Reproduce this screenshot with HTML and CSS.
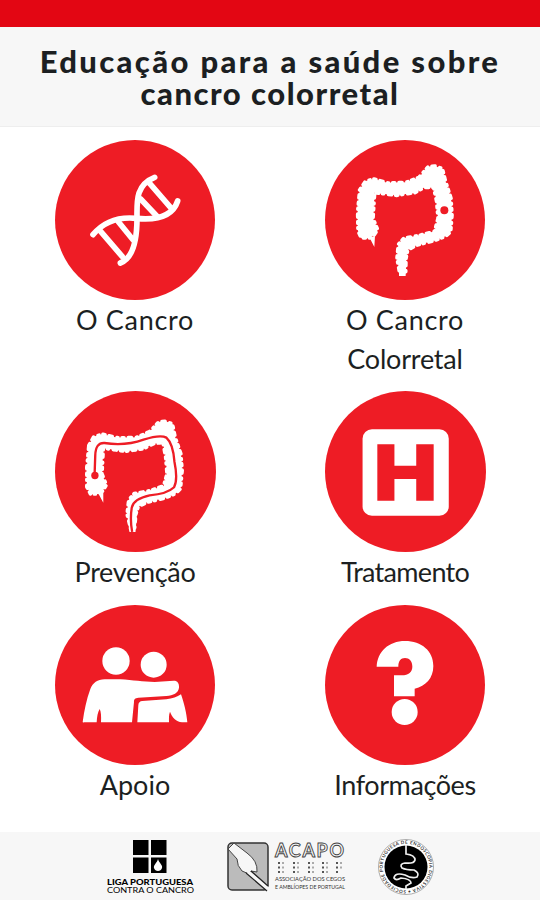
FILE: index.html
```html
<!DOCTYPE html>
<html lang="pt">
<head>
  <meta charset="UTF-8">
  <meta name="viewport" content="width=device-width, initial-scale=1.0">
  <title>Educação para a saúde sobre cancro colorretal</title>
  <link rel="stylesheet" href="styles.css">
</head>
<body>
  <div class="topbar"></div>
  <header class="header">
    <h1><span class="line-one">Educação para a saúde sobre</span><br><span class="line-two">cancro colorretal</span></h1>
  </header>

  <main class="menu">
    <a class="item cancro">
      <!-- ADN -->
      <svg class="icon" viewBox="16 15 480 480">
        <g class="dna">
          <path d="M130 299C165 257 210 245 260 250C330 257 370 240 384 198"/>
          <path d="M315 127C257 150 262 200 262 250C262 320 250 370 212 384"/>
          <path d="M151 287L218 365M206 260L250 314M273 192L324 246M300 145L365 220"/>
        </g>
      </svg>
      <span>O Cancro</span>
    </a>
    <a class="item colorretal">
      <svg class="icon" viewBox="16 15 480 480">
        <path class="colon" d="M120 165L138 138L163 132L205 144L260 142L298 127L325 96L345 93L368 101L378 140L394 190L397 240L393 290L378 304L340 318L290 331L264 345L259 370L258 415L240 415L232 370L236 328L252 310L300 301L345 289L355 250L351 200L342 158L315 157L285 173L230 181L165 173L160 250L174 284L163 300L150 309L125 309L115 288L114 230Z"/>
        <path class="shape" d="M149 307L164 336L166 303ZM238 370L238 423H258L260 355Z"/>
        <circle class="spot" cx="374" cy="226" r="12"/>
      </svg>
      <span><span class="first">O Cancro</span><br>Colorretal</span>
    </a>
    <a class="item prevencao">
      <svg class="icon" viewBox="16 18 480 480">
        <path class="colon" d="M117 180L132 154L158 147L205 158L260 156L298 139L325 111L345 108L366 116L374 155L391 205L395 255L390 309L375 324L340 338L290 350L264 363L257 385L253 430L242 430L231 385L236 342L252 324L300 315L340 301L350 265L346 215L338 172L312 174L280 190L225 198L160 188L156 265L169 298L158 316L147 325L122 325L111 304L111 245Z"/>
        <path class="shape" d="M144 321L160 351L160 316ZM231 385L238 438H256L262 365Z"/>
        <!-- percurso do endoscópio -->
        <path class="scope" d="M134 268L136 210Q137 172 163 173Q225 183 280 163Q330 147 348 157Q368 175 372 228Q383 282 371 305Q350 325 298 329Q251 339 245 365Q239 400 246 438"/>
        <circle class="spot" cx="135" cy="270" r="11"/>
      </svg>
      <span>Prevenção</span>
    </a>
    <a class="item tratamento">
      <svg class="icon" viewBox="16 18 480 480">
        <rect class="shape" x="128" y="132" width="257" height="258" rx="28"/>
        <path class="spot" d="M172 177H223V241H288V177H340V345H288V280H223V345H172Z"/>
      </svg>
      <span>Tratamento</span>
    </a>
    <a class="item apoio">
      <svg class="icon" viewBox="16 15 480 480">
        <circle class="shape" cx="199" cy="183" r="41"/>
        <circle class="shape" cx="312" cy="194" r="39"/>
        <path class="shape" d="M99 366C104 330 110 300 122 267C130 248 143 239 165 238H212C250 240 280 246 315 246L372 242C384 242 389 250 388 263C386 279 371 286 350 288L266 293C256 294 253 297 253 306L247 367H154C155 348 154 335 150 327C144 337 142 349 141 367H104Q99 368 99 366Z"/>
        <path class="shape" d="M263 367L266 315Q267 304 278 303L350 298Q377 295 394 283C402 305 411 340 413 367H397C379 365 367 352 361 335C357 345 358 356 358 367Z"/>
      </svg>
      <span>Apoio</span>
    </a>
    <a class="item informacoes">
      <svg class="icon" viewBox="16 15 480 480">
        <path class="shape" d="M171 200C173 155 207 123 256 123C306 123 341 153 341 198C341 235 318 258 285 266V289H223V226H246C267 226 278 215 278 200C278 184 269 174 256 174C243 174 236 184 236 200Z"/>
        <circle class="shape" cx="255" cy="336" r="39"/>
      </svg>
      <span>Informações</span>
    </a>
  </main>

  <footer class="footer">
    <!-- Liga Portuguesa Contra o Cancro -->
    <svg class="logo-liga" viewBox="0 0 90 68">
      <path d="M28 8H43.500V23H28ZM46 8H61.500V23H46ZM28 25.500H43.500V41H28ZM46 25.500H61.500V41H46Z"/>
      <path class="flame" d="M53 27C54 31 58 33 57 36C56 40 50 40 49 36C48 33 52 31 53 27Z"/>
      <text class="liga-name" x="2" y="52.500" textLength="86" lengthAdjust="spacingAndGlyphs">LIGA PORTUGUESA</text>
      <text class="liga-sub" x="2" y="61" textLength="87" lengthAdjust="spacingAndGlyphs">CONTRA O CANCRO</text>
    </svg>
    <!-- ACAPO -->
    <svg class="logo-acapo" viewBox="0 0 124 68">
      <rect class="hand-box" x="3" y="11" width="40" height="47" rx="4"/>
      <path class="hand" d="M3 17L9 11L22 21Q33 29 32 40L26 39L24 42L17 39Q12 34 12 27Z"/>
      <path class="stick" d="M23 40L43 57"/>
      <path class="cane" d="M21 41L42 59M26 39L43 54"/>
      <text class="acapo-name" x="50" y="25" textLength="69">ACAPO</text>
      <g class="braille">
        <path d="M54 30V41M69 30V41M84 30V41M98 30V41M112 30V41"/>
        <path class="faint" d="M58 30V41M73 30V41M88 30V41M102 30V41M116 30V37"/>
      </g>
      <text class="acapo-sub" x="50" y="49" textLength="70" lengthAdjust="spacingAndGlyphs">ASSOCIAÇÃO DOS CEGOS</text>
      <text class="acapo-sub" x="50" y="57" textLength="70" lengthAdjust="spacingAndGlyphs">E AMBLÍOPES DE PORTUGAL</text>
    </svg>
    <!-- Sociedade de endoscopia -->
    <svg class="logo-round" viewBox="0 0 58 68">
      <circle class="ring" cx="29" cy="35" r="27.500"/>
      <circle cx="29" cy="35" r="21.500"/>
      <path id="ring-path" class="no-fill" d="M29 58.300A23.300 23.300 0 1 1 29.100 58.300"/>
      <text class="ring-text"><textPath href="#ring-path" textLength="144">SOCIEDADE PORTUGUESA DE ENDOSCOPIA DIGESTIVA •</textPath></text>
      <path class="snake" d="M29 13V22Q38 23 38 28Q37 32 28 31Q22 32 25 36Q29 38 37 38Q43 41 40 45Q35 47 28 43Q18 40 17 46Q19 49 24 46Q34 47 34 51L29 54V57"/>
    </svg>
  </footer>
</body>
</html>
```
FILE: styles.css
```css
body {
  margin: 0;
  height: 900px;
  display: flex;
  flex-direction: column;
  background: #fff;
  color: #1c1f22;
  font-family: Lato, sans-serif;
  overflow: hidden;
}

/* Barra vermelha */
.topbar {
  height: 27px;
  flex: none;
  background: #e30613;
}

/* Título */
.header {
  box-sizing: border-box;
  height: 100px;
  flex: none;
  padding-top: 18px;
  background: #f7f7f7;
  border-bottom: 1px solid #eee;
  text-align: center;
}

h1 {
  margin: 0;
  font-size: 31px;
  font-weight: 900;
  line-height: 32px;
  white-space: nowrap;
}

.line-one {
  letter-spacing: 2.35px;
}

.line-two {
  letter-spacing: 1.5px;
}

/* Menu */
.menu {
  flex: 1;
  display: grid;
  grid-template-columns: 270px 270px;
  align-content: start;
  row-gap: 13px;
  padding-top: 13px;
}

.item {
  display: flex;
  flex-direction: column;
  align-items: center;
  font-size: 27px;
  line-height: 39px;
  text-align: center;
}

.icon {
  width: 160px;
  height: 160px;
  border-radius: 50%;
  background: #ee1c25;
}

.prevencao .icon,
.tratamento .icon {
  width: 161px;
  height: 161px;
}

.apoio,
.informacoes {
  padding-top: 1px;
}

/* Espaçamento das legendas */
.cancro,
.first {
  letter-spacing: 0.7px;
}

.colorretal {
  letter-spacing: -0.2px;
}

.prevencao {
  letter-spacing: -0.3px;
}

.tratamento {
  letter-spacing: -0.7px;
}

.informacoes {
  letter-spacing: -0.4px;
}

/* Desenhos dos ícones */
.dna {
  fill: none;
  stroke: #fff;
  stroke-width: 17;
  stroke-linecap: round;
}

.shape {
  fill: #fff;
}

.spot {
  fill: #ee1c25;
}

.colon {
  fill: #fff;
  stroke: #fff;
  stroke-width: 11;
  stroke-linecap: round;
  stroke-linejoin: round;
  stroke-dasharray: 6 13 9 15 3 12;
}

.scope {
  fill: none;
  stroke: #ee1c25;
  stroke-width: 7;
}

/* Rodapé com os logótipos */
.footer {
  height: 68px;
  flex: none;
  display: flex;
  padding-left: 105px;
  background: #f7f7f7;
}

.logo-liga {
  width: 90px;
  height: 68px;
}

.logo-acapo {
  width: 124px;
  height: 68px;
  margin-left: 30px;
}

.logo-round {
  width: 58px;
  height: 68px;
  margin-left: 28px;
}

.flame {
  fill: #fff;
}

.liga-name {
  font-size: 7.5px;
  font-weight: 900;
}

.liga-sub {
  font-size: 7.5px;
}

.hand-box {
  fill: #bbb;
  stroke: #333;
  stroke-width: 1.5;
}

.hand {
  fill: #f7f7f7;
  stroke: #444;
  stroke-width: 1;
}

.stick {
  stroke: #f7f7f7;
  stroke-width: 4;
}

.cane {
  stroke: #222;
  stroke-width: 1.2;
}

.acapo-name {
  font-size: 18px;
  font-weight: 700;
  fill: #f7f7f7;
  stroke: #444;
  stroke-width: 0.9;
}

.braille {
  stroke: #555;
  stroke-width: 2;
  stroke-dasharray: 2 2.5;
}

.faint {
  stroke: #aaa;
}

.acapo-sub {
  font-size: 6px;
  fill: #333;
}

.ring {
  fill: #fff;
  stroke: #777;
  stroke-width: 0.6;
}

.no-fill {
  fill: none;
}

.ring-text {
  font-size: 4.5px;
  font-weight: 700;
  fill: #333;
}

.snake {
  fill: none;
  stroke: #eee;
  stroke-width: 1.7;
}
```
